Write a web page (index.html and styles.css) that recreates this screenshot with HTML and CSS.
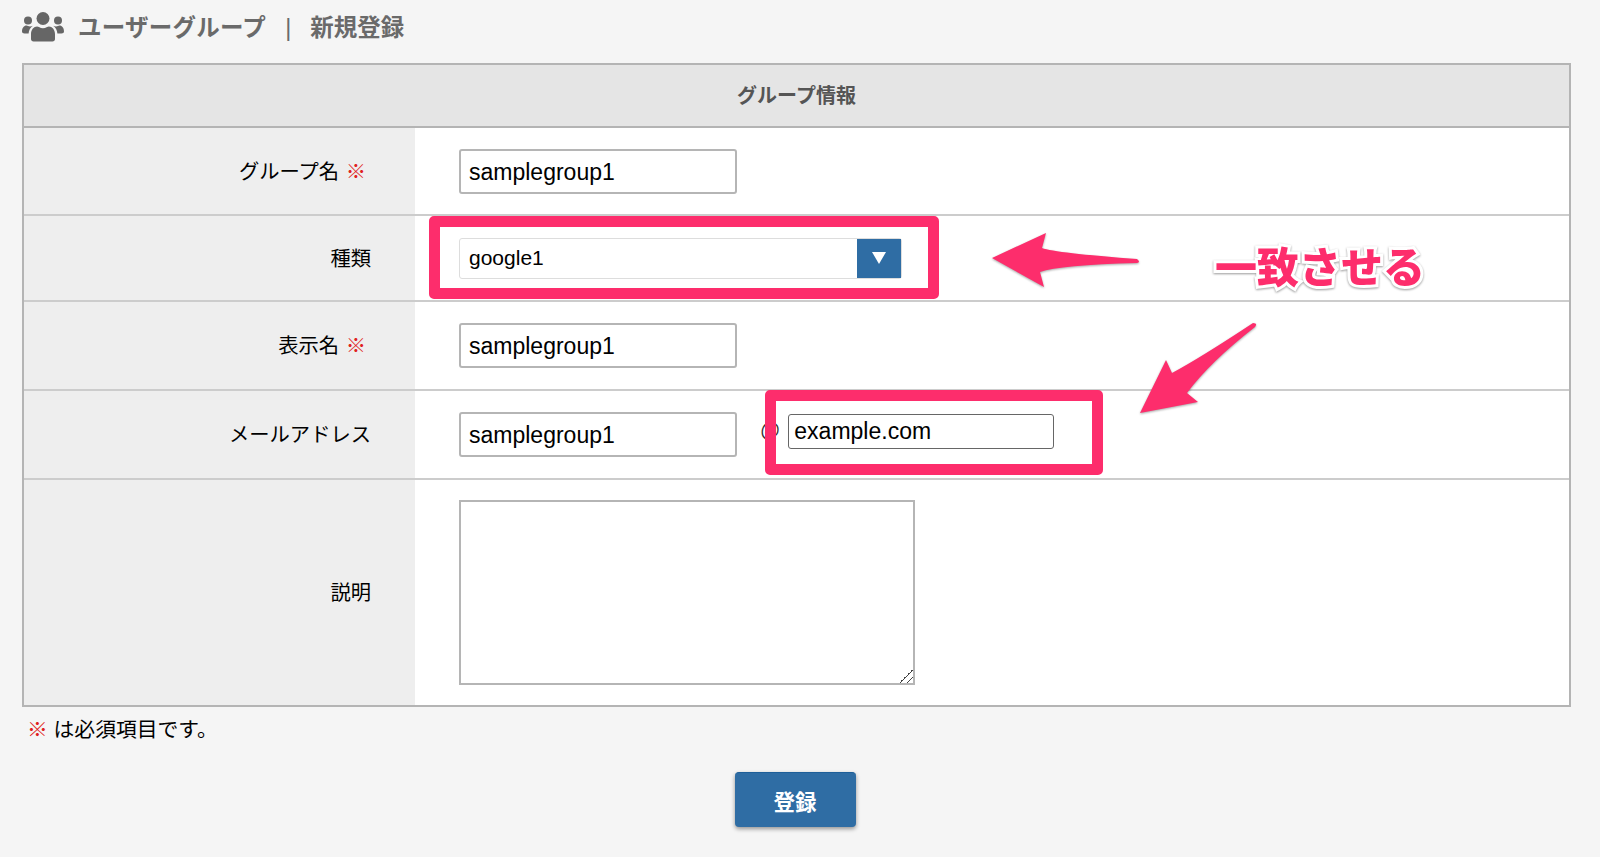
FILE: index.html
```html
<!DOCTYPE html>
<html lang="ja">
<head>
<meta charset="utf-8">
<title>ユーザーグループ | 新規登録</title>
<link rel="stylesheet" href="styles.css">
</head>
<body>
<header class="page-title">
  <svg class="title-icon" viewBox="0 0 42 30" aria-hidden="true">
    <circle cx="21" cy="6.5" r="6.5"/>
    <circle cx="6" cy="8.5" r="4"/>
    <circle cx="36" cy="8.5" r="4"/>
    <path d="M11.5 29.5c-1.500 0-2.500-1-2.500-2.500v-5c0-4.500 3-7.500 6-7.500 1.500 0 3 1.700 6 1.700s4.500-1.700 6-1.700c3 0 6 3 6 7.500v5c0 1.500-1 2.500-2.500 2.500z"/>
    <path d="M0 19.500c0-3.500 2-6 4.500-6 1 0 2 .9 3.500.9 1 0 2-.4 2.800-.7-2.400 1.700-4 4.600-4.200 7.800H2.500C1 21.500 0 20.800 0 19.500z"/>
    <path d="M42 19.500c0-3.500-2-6-4.500-6-1 0-2 .9-3.500.9-1 0-2-.4-2.800-.7 2.400 1.700 4 4.600 4.200 7.800h4.100c1.500 0 2.500-.7 2.500-2z"/>
  </svg>
  <h1 class="title-text"><span class="title-main">ユーザーグループ</span><span class="title-sep">|</span><span>新規登録</span></h1>
</header>

<form class="form-table">
  <div class="form-head">グループ情報</div>

  <div class="form-row row-name">
    <div class="form-label">グループ名 <span class="req">※</span></div>
    <div class="form-field"><input class="text-input" type="text" value="samplegroup1"></div>
  </div>

  <div class="form-row row-type">
    <div class="form-label form-label-plain">種類</div>
    <div class="form-field">
      <div class="select-box">
        <span class="select-value">google1</span>
        <span class="select-btn"><svg class="select-caret" viewBox="0 0 14 12" aria-hidden="true"><path d="M0 0h14L7 12z"/></svg></span>
      </div>
    </div>
  </div>

  <div class="form-row row-display">
    <div class="form-label">表示名 <span class="req">※</span></div>
    <div class="form-field"><input class="text-input" type="text" value="samplegroup1"></div>
  </div>

  <div class="form-row row-mail">
    <div class="form-label form-label-plain">メールアドレス</div>
    <div class="form-field">
      <input class="text-input" type="text" value="samplegroup1">
      <span class="at">@</span>
      <input class="domain-input" type="text" value="example.com">
    </div>
  </div>

  <div class="form-row row-desc">
    <div class="form-label form-label-plain">説明</div>
    <div class="form-field"><textarea class="desc-input"></textarea></div>
  </div>
</form>

<p class="note"><span class="req">※</span> は必須項目です。</p>

<div class="actions"><button class="submit" type="button">登録</button></div>

<div class="mark mark-select"></div>
<div class="mark mark-domain"></div>
<svg class="arrows" viewBox="0 0 1600 857" aria-hidden="true">
  <path class="arrow" d="M992 258L1046 233L1042 248Q1056 253 1137 259Q1141 262 1137 263Q1060 265 1040 272L1044 287z"/>
  <path class="arrow" d="M1140 413L1166 360L1172 373Q1200 358 1253 323Q1258 323 1255 327Q1210 362 1187 393L1198 402z"/>
</svg>
<div class="callout">一致させる</div>
</body>
</html>
```

FILE: styles.css
```css
* { box-sizing: border-box; }

html, body { height: 100%; }

body {
  position: relative;
  margin: 0;
  padding: 12px 29px 0 22px;
  background: #f5f5f5;
  color: #000;
  font-family: "Liberation Sans", "Noto Sans CJK JP", sans-serif;
  font-size: 20px;
  overflow: hidden;
}

.page-title {
  display: flex;
  align-items: center;
  gap: 14px;
  height: 30px;
  margin-bottom: 21px;
}

.title-icon { width: 42px; height: 30px; fill: #666; flex: none; }

.title-text {
  display: flex;
  margin: 2px 0 0;
  color: #6a6a6a;
  font-size: 23.5px;
  font-weight: 700;
  line-height: 30px;
}

.title-main { letter-spacing: .25px; }

.title-sep { margin: 0 19px; font-weight: 400; }

.form-table {
  border: 2px solid #b4b4b4;
  background: #fff;
}

.form-head {
  height: 61px;
  background: #e5e5e5;
  color: #555;
  font-weight: 700;
  line-height: 62px;
  text-align: center;
}

.form-row {
  display: grid;
  grid-template-columns: 391px 1fr;
  border-top: 2px solid #ccc;
}

.form-head + .form-row { border-top-color: #b4b4b4; }

.form-label {
  display: flex;
  align-items: center;
  justify-content: flex-end;
  gap: 1px;
  padding: 0 49px 3px 0;
  background: #eee;
  font-size: 20.3px;
  white-space: pre;
}

.form-label-plain { padding-right: 44px; }

.req { color: #e02020; }

.form-field {
  display: flex;
  align-items: center;
  padding-left: 44px;
}

.row-name { height: 88px; }
.row-type { height: 86px; }
.row-display { height: 89px; }
.row-mail { height: 89px; }
.row-desc { height: 227px; }

.text-input {
  width: 278px;
  height: 45px;
  padding: 2px 8px 0;
  border: 2px solid #b5b5b5;
  border-radius: 3px;
  background: #fff;
  color: #000;
  font: 23px "Liberation Sans", sans-serif;
}

.select-box {
  display: flex;
  width: 443px;
  height: 41px;
  border: 1px solid #ddd;
  border-radius: 3px;
}

.select-value {
  flex: 1;
  padding-left: 9px;
  font-size: 21px;
  line-height: 38px;
}

.select-btn {
  display: flex;
  align-items: center;
  justify-content: center;
  width: 44px;
  background: #2f6da4;
}

.select-caret { width: 14px; height: 12px; margin-bottom: 1px; fill: #fff; }

.at { margin: 0 8px 8px 23px; font-size: 20px; color: #333; }

.domain-input {
  width: 266px;
  height: 35px;
  margin-bottom: 6px;
  padding: 0 5px;
  border: 1px solid #666;
  border-radius: 3px;
  background: #fff;
  color: #000;
  font: 23px "Liberation Sans", sans-serif;
}

.desc-input {
  display: block;
  width: 456px;
  height: 185px;
  border: 2px solid #b5b5b5;
  resize: none;
  background: linear-gradient(135deg, transparent 50%, #444 50% 56%, transparent 56% 76%, #444 76% 82%, transparent 82%) right bottom / 14px 14px no-repeat #fff;
}

.note {
  margin: 9px 0 0 5px;
  font-size: 20.8px;
  line-height: 28px;
}

.actions {
  display: flex;
  justify-content: center;
  margin: 28px 0 0 -3px;
}

.submit {
  width: 121px;
  height: 55px;
  border: 0;
  border-top: 1px solid #1e5f99;
  border-radius: 4px;
  background: #2f6da4;
  box-shadow: 0 2px 4px rgba(0, 0, 0, .4);
  color: #fff;
  font: 700 21.5px "Liberation Sans", "Noto Sans CJK JP", sans-serif;
}

.mark {
  position: absolute;
  border: 11px solid #fd2d6c;
  border-radius: 5px;
}

.mark-select { left: 429px; top: 216px; width: 510px; height: 83px; }
.mark-domain { left: 765px; top: 390px; width: 338px; height: 85px; }

.arrows {
  position: absolute;
  left: 0;
  top: 0;
  width: 1600px;
  height: 857px;
  pointer-events: none;
}

.arrow {
  fill: #fd2d6c;
  filter: drop-shadow(0 1px 1px rgba(0, 0, 0, .35));
}

.callout {
  position: absolute;
  left: 1215px;
  top: 237px;
  color: #fd2d6c;
  font: 900 42px/56px "Noto Sans CJK JP", sans-serif;
  -webkit-text-stroke: 6px #fff;
  paint-order: stroke fill;
  filter: drop-shadow(0 1px 1px rgba(0, 0, 0, .4));
  white-space: nowrap;
}
```
